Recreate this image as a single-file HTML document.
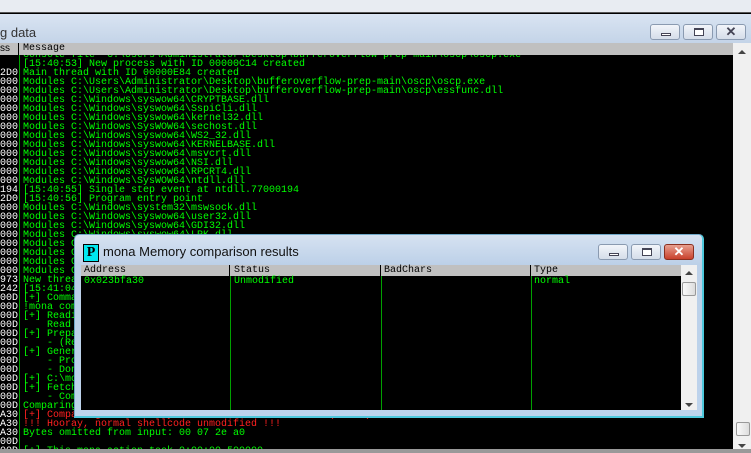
<!DOCTYPE html>
<html><head><style>
*{margin:0;padding:0;box-sizing:border-box}
body{width:751px;height:453px;overflow:hidden;background:#000;position:relative;font-family:"Liberation Sans",sans-serif}
.abs{position:absolute}
.mono{font-family:"Liberation Mono",monospace;font-size:10px;line-height:9px;white-space:pre;color:#00ff00}
.btn{position:absolute;width:30px;height:16px;border:1px solid #8a9ab0;border-radius:3px;background:linear-gradient(#f2f5fa,#d5dde9)}
.btn i{position:absolute;display:block}
.up{position:absolute;width:0;height:0;border-left:4px solid transparent;border-right:4px solid transparent;border-bottom:4px solid #444}
.dn{position:absolute;width:0;height:0;border-left:4px solid transparent;border-right:4px solid transparent;border-top:4px solid #444}
</style></head><body>
<div class="abs" style="left:0;top:0;width:751px;height:13px;background:#e8ecf2;border-bottom:1px solid #555"></div>
<div class="abs" style="left:0;top:14px;width:751px;height:29px;background:linear-gradient(#d9e4f2,#c4d4e8)"></div>
<div class="abs" style="left:0;top:25px;font-size:13px;color:#333">g data</div>
<div class="btn" style="left:650px;top:24px"><i style="left:10px;top:8px;width:10px;height:3px;border:1px solid #445;background:#fff"></i></div>
<div class="btn" style="left:683px;top:24px"><i style="left:10px;top:3px;width:10px;height:8px;border:1px solid #445;border-top-width:2px;background:#fff"></i></div>
<div class="btn" style="left:716px;top:24px;text-align:center;font-size:13px;font-weight:bold;color:#445;line-height:14px">✕</div>
<div class="abs" style="left:0;top:43px;width:733px;height:12px;background:#c0c0c0;font-size:10px;line-height:12px;color:#000"><span style="position:absolute;left:0">ss</span><span style="position:absolute;left:18px;top:0;width:1px;height:12px;background:#000"></span><span style="position:absolute;left:23px;font-family:'Liberation Mono',monospace">Message</span></div>
<div class="abs" style="left:19px;top:55px;width:1px;height:394px;background:#00a000"></div>
<div class="abs" style="left:733px;top:43px;width:18px;height:406px;background:#f0f0f0"></div>
<div class="up" style="left:738px;top:50px"></div>
<div class="dn" style="left:738px;top:444px"></div>
<div class="abs" style="left:736px;top:422px;width:14px;height:14px;border:1px solid #999;border-radius:2px;background:linear-gradient(90deg,#fafafa,#ddd)"></div>
<div class="abs" style="left:0;top:449px;width:751px;height:4px;background:#999"></div>
<div class="abs" style="left:0;top:55px;width:733px;height:394px;overflow:hidden">
<div class="mono" style="position:absolute;left:0;top:-4px;width:18px;overflow:hidden;color:#fff;text-align:right">

2D0
000
000
000
000
000
000
000
000
000
000
000
000
194
2D0
000
000
000
000
000
000
000
000
973
242
00D
00D
00D
00D
00D
00D
00D
00D
00D
00D
00D
00D
00D
A30
A30
A30
00D
00D</div>
<div class="mono" style="position:absolute;left:23px;top:-4px">Console file 'C:\Users\Administrator\Desktop\bufferoverflow-prep-main\oscp\oscp.exe'
[15:40:53] New process with ID 00000C14 created
Main thread with ID 00000E84 created
Modules C:\Users\Administrator\Desktop\bufferoverflow-prep-main\oscp\oscp.exe
Modules C:\Users\Administrator\Desktop\bufferoverflow-prep-main\oscp\essfunc.dll
Modules C:\Windows\syswow64\CRYPTBASE.dll
Modules C:\Windows\syswow64\SspiCli.dll
Modules C:\Windows\syswow64\kernel32.dll
Modules C:\Windows\SysWOW64\sechost.dll
Modules C:\Windows\syswow64\WS2_32.dll
Modules C:\Windows\syswow64\KERNELBASE.dll
Modules C:\Windows\syswow64\msvcrt.dll
Modules C:\Windows\syswow64\NSI.dll
Modules C:\Windows\syswow64\RPCRT4.dll
Modules C:\Windows\SysWOW64\ntdll.dll
[15:40:55] Single step event at ntdll.77000194
[15:40:56] Program entry point
Modules C:\Windows\system32\mswsock.dll
Modules C:\Windows\syswow64\user32.dll
Modules C:\Windows\syswow64\GDI32.dll
Modules C:\Windows\syswow64\LPK.dll
Modules C:\Windows\syswow64\USP10.dll
Modules C:\Windows\syswow64\IMM32.dll
Modules C:\Windows\syswow64\MSCTF.dll
Modules C:\Windows\syswow64\wship6.dll
New thread with ID 00000973 created
[15:41:04] Thread 00000242 terminated
[+] Command used:
!mona compare -f C:\mona\oscp\bytearray.bin -a 023bfa30
[+] Reading file
    Read 253 bytes from file
[+] Preparing output file
    - (Re)setting logfile
[+] Generating module info table
    - Processing modules
    - Done. Let's rock 'n roll.
[+] C:\mona\oscp\bytearray.bin has been read
[+] Fetched 1 address
    - Comparing
Comparing bytes from file with memory :
<span style="color:#ff2020">[+] Comparing with memory at location : 0x023bfa30 (Stack)</span>
<span style="color:#ff2020">!!! Hooray, normal shellcode unmodified !!!</span>
Bytes omitted from input: 00 07 2e a0

[+] This mona action took 0:00:00.500000</div>
</div>
<!-- mona window -->
<div class="abs" style="left:74px;top:234px;width:630px;height:184px;background:linear-gradient(#d6e2f1,#bcd0e8 30px,#bdd3ec);border:1px solid #6fa8c8;border-bottom:2px solid #4ec8dc;border-right:2px solid #4ec8dc;border-radius:5px 5px 0 0"></div>
<div class="abs" style="left:83px;top:244px;width:16px;height:18px;background:#00e8f0;border:1px solid #000;font-family:'Liberation Serif',serif;font-weight:bold;font-size:14px;line-height:16px;text-align:center">P</div>
<div class="abs" style="left:103px;top:244px;font-size:13px;color:#111">mona Memory comparison results</div>
<div class="btn" style="left:598px;top:244px"><i style="left:10px;top:8px;width:10px;height:3px;border:1px solid #445;background:#fff"></i></div>
<div class="btn" style="left:631px;top:244px"><i style="left:10px;top:3px;width:10px;height:8px;border:1px solid #445;border-top-width:2px;background:#fff"></i></div>
<div class="btn" style="left:664px;top:244px;background:linear-gradient(#e8a090,#c8412c);border-color:#8a3020;text-align:center;font-size:13px;font-weight:bold;color:#fff;line-height:14px">✕</div>
<div class="abs" style="left:81px;top:265px;width:600px;height:145px;background:#000"></div>
<div class="abs" style="left:81px;top:265px;width:600px;height:11px;background:#c0c0c0;font-family:'Liberation Mono',monospace;font-size:10px;line-height:11px;color:#000">
<span style="position:absolute;left:3px">Address</span><span style="position:absolute;left:148px;width:1px;height:11px;background:#000"></span>
<span style="position:absolute;left:153px">Status</span><span style="position:absolute;left:299px;width:1px;height:11px;background:#000"></span>
<span style="position:absolute;left:303px">BadChars</span><span style="position:absolute;left:449px;width:1px;height:11px;background:#000"></span>
<span style="position:absolute;left:453px">Type</span></div>
<div class="abs" style="left:230px;top:276px;width:1px;height:134px;background:#00a000"></div>
<div class="abs" style="left:381px;top:276px;width:1px;height:134px;background:#00a000"></div>
<div class="abs" style="left:531px;top:276px;width:1px;height:134px;background:#00a000"></div>
<div class="mono abs" style="left:84px;top:277px">0x023bfa30</div>
<div class="mono abs" style="left:234px;top:277px">Unmodified</div>
<div class="mono abs" style="left:534px;top:277px">normal</div>
<div class="abs" style="left:681px;top:265px;width:16px;height:145px;background:#f0f0f0"></div>
<div class="up" style="left:685px;top:271px"></div>
<div class="dn" style="left:685px;top:403px"></div>
<div class="abs" style="left:682px;top:282px;width:14px;height:14px;border:1px solid #999;border-radius:2px;background:linear-gradient(90deg,#fafafa,#ddd)"></div>
</body></html>
